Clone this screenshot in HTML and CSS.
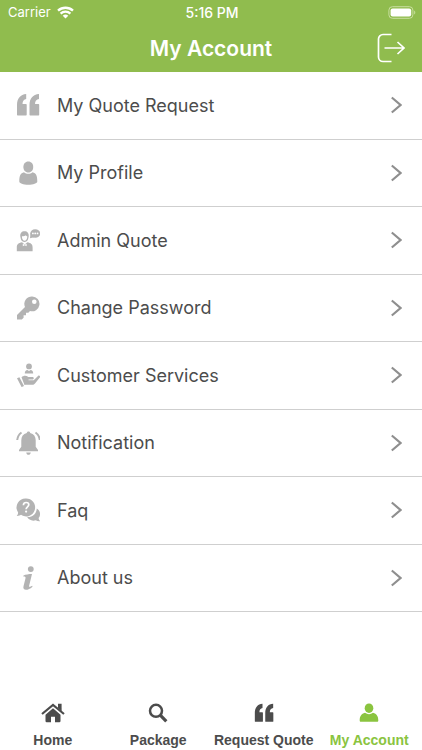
FILE: index.html
```html
<!DOCTYPE html>
<html lang="en">
<head>
    <meta charset="UTF-8">
    <meta name="viewport" content="width=device-width, initial-scale=1.0">
    <title>My Account</title>
    <link rel="stylesheet" href="styles.css">
</head>
<body>
    <svg class="defs" aria-hidden="true">
        <symbol id="quote" viewBox="0 0 24 24">
            <path d="M10.200 1v5C8 6.400 6.500 8 6.500 11H10a.7.7 0 0 1 .7.700V21.800a.7.7 0 0 1-.7.700H1.700a.7.7 0 0 1-.7-.700V12C1 5.500 4.500 1.300 10.200 1zM23 1v5c-2.500.4-4 2-4 5h3.500a.7.7 0 0 1 .7.700V21.800a.7.7 0 0 1-.7.700H14.200a.7.7 0 0 1-.7-.700V12C13.500 5.500 17 1.300 23 1z"/>
        </symbol>
        <symbol id="chevron" viewBox="0 0 12 18">
            <path d="M1.800 1.500L10.500 9l-8.700 7.500" fill="none" stroke="currentColor" stroke-width="2.200"/>
        </symbol>
    </svg>

    <header class="header">
        <div class="status">
            <div class="carrier">
                <span>Carrier</span>
                <svg class="wifi" viewBox="0 0 17 13">
                    <path d="M1 4.700a11 11 0 0 1 15 0M3.600 7.600a7.200 7.200 0 0 1 9.800 0" fill="none" stroke="currentColor" stroke-width="2.300"/>
                    <path d="M8.500 12.600L5.700 9.800a4 4 0 0 1 5.600 0z" fill="currentColor"/>
                </svg>
            </div>
            <span class="time">5:16 PM</span>
            <svg class="battery" viewBox="0 0 28 13">
                <rect x=".9" y=".7" width="24" height="11.600" rx="3.500" fill="none" stroke="#c8de9f" stroke-width="1"/>
                <rect x="2.600" y="2.400" width="20.600" height="8.200" rx="2" fill="#fff"/>
                <path d="M26.200 4.500c1.500.8 1.500 3.200 0 4z" fill="#c8de9f"/>
            </svg>
        </div>
        <div class="titlebar">
            <h1>My Account</h1>
            <button type="button" class="logout" aria-label="Log out">
                <svg viewBox="0 0 28 30">
                    <path d="M14.500 1.500H6a4.500 4.500 0 0 0-4.500 4.500v18A4.500 4.500 0 0 0 6 28.500h8.500M7.500 15H27M20.500 9l6.500 6-6.500 6" fill="none" stroke="currentColor" stroke-width="1.700"/>
                </svg>
            </button>
        </div>
    </header>

    <main>
        <ul class="menu">
            <li>
                <a href="#quote-request">
                    <svg class="icon"><use href="#quote"/></svg>
                    <span>My Quote Request</span>
                    <svg class="arrow"><use href="#chevron"/></svg>
                </a>
            </li>
            <li>
                <a href="#profile">
                    <svg class="icon" viewBox="0 0 24 24">
                        <path d="M12.300.5c3 0 4.900 2.300 4.900 5.500s-1.900 5.500-4.900 5.500S7.400 9.200 7.400 6s1.900-5.500 4.900-5.500z"/>
                        <path d="M8 11.300c2.500 2 6.100 2 8.600 0 3.500.8 4.700 3.700 4.700 9.200 0 1.800-4 3.300-9 3.300s-9-1.500-9-3.300c0-5.500 1.200-8.400 4.700-9.200z"/>
                    </svg>
                    <span>My Profile</span>
                    <svg class="arrow"><use href="#chevron"/></svg>
                </a>
            </li>
            <li>
                <a href="#admin-quote">
                    <svg class="icon" viewBox="0 0 24 24">
                        <path d="M8.500 3.200c3 0 4.500 2 4.200 5.400l-.7 2.900c-.6 1.500-1.900 2.500-3.500 2.500s-2.900-1-3.500-2.500l-.7-2.900c-.3-3.400 1.200-5.400 4.200-5.400z"/>
                        <path d="M5.900 8.300c2 0 3-.3 4-1.100.4.800.8 1.100 1.400 1.100 0 2.800-1.200 4.500-2.700 4.500s-2.700-1.700-2.700-4.500z" fill="#fff"/>
                        <path d="M.8 23.200v-3.700c0-3.500 1.700-4.500 5.200-5.300l2.700 2.300 2.700-2.300c3.500.8 5.200 1.800 5.200 5.300v3.700z"/>
                        <path d="M6.800 15.800l1.900 1 1.900-1v2.400l-1.900-1-1.900 1z" fill="#fff"/>
                        <ellipse cx="19.200" cy="5.500" rx="5" ry="4.300"/>
                        <path d="M14.500 6l-.5 4.300 4-1z"/>
                        <g fill="#fff"><circle cx="16.900" cy="5.400" r=".9"/><circle cx="19.200" cy="5.400" r=".9"/><circle cx="21.500" cy="5.400" r=".9"/></g>
                    </svg>
                    <span>Admin Quote</span>
                    <svg class="arrow"><use href="#chevron"/></svg>
                </a>
            </li>
            <li>
                <a href="#password">
                    <svg class="icon" viewBox="0 0 24 24">
                        <path fill-rule="evenodd" d="M16.200.5a7.400 7.400 0 1 1-2.200 14.500L12.300 16.700H10v2.500H7.600v2.600L5.800 23.600H1V19L9 11A7.400 7.400 0 0 1 16.200.5zM18.300 3.500a2.300 2.300 0 1 0 0 4.600 2.300 2.300 0 0 0 0-4.600z"/>
                    </svg>
                    <span>Change Password</span>
                    <svg class="arrow"><use href="#chevron"/></svg>
                </a>
            </li>
            <li>
                <a href="#services">
                    <svg class="icon" viewBox="0 0 24 24">
                        <circle cx="13" cy="3.400" r="2.900"/>
                        <path d="M8.800 10.600c0-2.500 1-3.700 2.600-3.700L13 8l1.600-1.100c1.600 0 2.600 1.200 2.600 3.700z"/>
                        <path d="M1 15.300l2.400-1.100L8 23l-2.400 1.100zM5.500 14.300c2-2 4.800-2 6.800-.3h4.200c1.700 0 1.700 2.500 0 2.500h-4v.7h5.200l4.300-4.300c1.300-1 2.800.4 1.800 1.600l-4.800 6c-.8.9-1.500 1.200-2.500 1.200H9.700L8.500 22z"/>
                    </svg>
                    <span>Customer Services</span>
                    <svg class="arrow"><use href="#chevron"/></svg>
                </a>
            </li>
            <li>
                <a href="#notification">
                    <svg class="icon" viewBox="0 0 24 24">
                        <path d="M12.500.4c1 0 1.700.7 1.700 1.600 3.700.8 5.500 3.500 5.500 7.200v6.500l2.300 3.300v1.300H3V19l2.300-3.300V9.200c0-3.700 1.800-6.400 5.500-7.200 0-.9.700-1.600 1.700-1.600zM10.200 21.500h4.600c-.3 1.500-1.100 2.300-2.300 2.300s-2-.8-2.300-2.300z"/>
                        <path d="M5.500 1.500Q1.800 4 1.200 9M19.500 1.500Q23.200 4 23.800 9" fill="none" stroke="currentColor" stroke-width="2"/>
                    </svg>
                    <span>Notification</span>
                    <svg class="arrow"><use href="#chevron"/></svg>
                </a>
            </li>
            <li>
                <a href="#faq">
                    <svg class="icon" viewBox="0 0 24 24">
                        <path d="M20.800 10.500c3.700 2.300 4.200 6.500 1.800 9.600.1 1.300.6 2.300 1.600 3.200-1.800.1-3.300-.2-4.500-1-3.500 1-7.200-.3-8.500-3.200 5.300.3 9.300-3.200 9.600-8.600z"/>
                        <path d="M10 .4a9 9 0 1 1-5 16.400c-1.200.9-2.600 1.200-4.300 1.100 1-1.100 1.400-2.200 1.400-3.500A9 9 0 0 1 10 .4z"/>
                        <path d="M7.400 7.200c0-1.700 1.100-2.700 2.700-2.700s2.700.9 2.700 2.300c0 1.900-2.700 2.200-2.700 4.400" fill="none" stroke="#fff" stroke-width="1.700"/>
                        <circle cx="10.100" cy="13.600" r="1.100" fill="#fff"/>
                    </svg>
                    <span>Faq</span>
                    <svg class="arrow"><use href="#chevron"/></svg>
                </a>
            </li>
            <li>
                <a href="#about">
                    <svg class="icon" viewBox="0 0 24 24">
                        <circle cx="14.800" cy="3.100" r="2.900"/>
                        <path d="M7.500 9.500c2.200-1 5-1.500 8.500-1.500l-2.800 11.500c-.3 1.400.3 1.600 1 1.300l2-1 .3.900c-2.500 2.200-4.500 3.100-6.500 3.100-2.200 0-3-1.300-2.500-3.500l2-8c.3-1.300-.2-1.800-2.200-1.700z"/>
                    </svg>
                    <span>About us</span>
                    <svg class="arrow"><use href="#chevron"/></svg>
                </a>
            </li>
        </ul>
    </main>

    <nav class="tabs">
        <a href="#home">
            <svg viewBox="0 0 24 20">
                <path d="M12 5.200l7.500 6.600V18a1.200 1.200 0 0 1-1.200 1.200H14v-5.400h-4v5.400H5.700A1.200 1.200 0 0 1 4.500 18v-6.200z"/>
                <path d="M1 11L12 1.900 23 11" fill="none" stroke="currentColor" stroke-width="2.200"/>
                <path d="M17 .8h3.600v7.500L17 5z"/>
            </svg>
            <span>Home</span>
        </a>
        <a href="#package">
            <svg viewBox="0 0 24 20">
                <g fill="none" stroke="currentColor"><circle cx="10" cy="7.800" r="6" stroke-width="2.500"/><path d="M14.500 12.300l5.800 6" stroke-width="3.200"/></g>
            </svg>
            <span>Package</span>
        </a>
        <a href="#request">
            <svg viewBox="0 0 24 20"><use href="#quote" x="1" y="0" width="22" height="20" /></svg>
            <span>Request Quote</span>
        </a>
        <a href="#account" class="active">
            <svg viewBox="0 0 24 20">
                <ellipse cx="12" cy="5.200" rx="4.300" ry="4.800"/>
                <path d="M8 9.800c2.600 1.800 5.400 1.800 8 0 3.700 1 5.300 3.500 5.300 7.600 0 .8-.4 1.300-1.200 1.300H3.900c-.8 0-1.200-.5-1.200-1.300 0-4.100 1.600-6.600 5.300-7.600z"/>
            </svg>
            <span>My Account</span>
        </a>
    </nav>
</body>
</html>
```

FILE: styles.css
```css
body {
    display: flex;
    flex-direction: column;
    min-height: 100vh;
    margin: 0;
    font-family: Inter, "Liberation Sans", sans-serif;
    background-color: #ffffff;
    color: #4c4c4c;
}

a {
    color: inherit;
    text-decoration: none;
}

svg {
    display: block;
    fill: currentColor;
}

.defs {
    position: absolute;
    width: 0;
    height: 0;
}

.header {
    background-color: #90bc4e;
    color: #ffffff;
}

.status {
    display: grid;
    grid-template-columns: 1fr auto 1fr;
    align-items: center;
    height: 24px;
    padding: 0 6px 0 8px;
    font-size: 13px;
}

.carrier {
    display: flex;
    align-items: center;
    gap: 6px;
}

.wifi {
    width: 17px;
    height: 13px;
}

.time {
    font-size: 14px;
    font-weight: 500;
}

.battery {
    width: 28px;
    height: 13px;
    justify-self: end;
}

.titlebar {
    display: grid;
    grid-template-columns: 1fr auto 1fr;
    align-items: center;
    height: 48px;
    padding: 0 17px;
}

.titlebar h1 {
    grid-column: 2;
    margin: 0;
    font-size: 21px;
    font-weight: 600;
}

.logout {
    justify-self: end;
    padding: 0;
    border: none;
    background: none;
    color: #ffffff;
    cursor: pointer;
}

.logout svg {
    width: 28px;
    height: 30px;
}

.menu {
    display: grid;
    grid-auto-rows: 1fr;
    min-height: 72vh;
    margin: 0;
    padding: 0;
    list-style: none;
}

.menu li {
    border-bottom: 1px solid #cfcfcf;
}

.menu a {
    display: flex;
    align-items: center;
    height: 100%;
    padding: 0 20px 0 16px;
    font-size: 18px;
}

.menu span {
    flex: 1;
    margin-left: 17px;
}

.icon {
    width: 24px;
    height: 24px;
    color: #b3b3b3;
}

.arrow {
    width: 12px;
    height: 18px;
    color: #8f8f8f;
}

.tabs {
    display: grid;
    grid-template-columns: repeat(4, 1fr);
    margin-top: auto;
    padding-bottom: 2px;
    font-family: "Liberation Sans", Arial, sans-serif;
    font-size: 14px;
    font-weight: bold;
    line-height: 16px;
}

.tabs a {
    display: flex;
    flex-direction: column;
    align-items: center;
    gap: 9px;
    white-space: nowrap;
}

.tabs svg {
    width: 24px;
    height: 20px;
}

.tabs .active {
    color: #8ac43f;
}
```
